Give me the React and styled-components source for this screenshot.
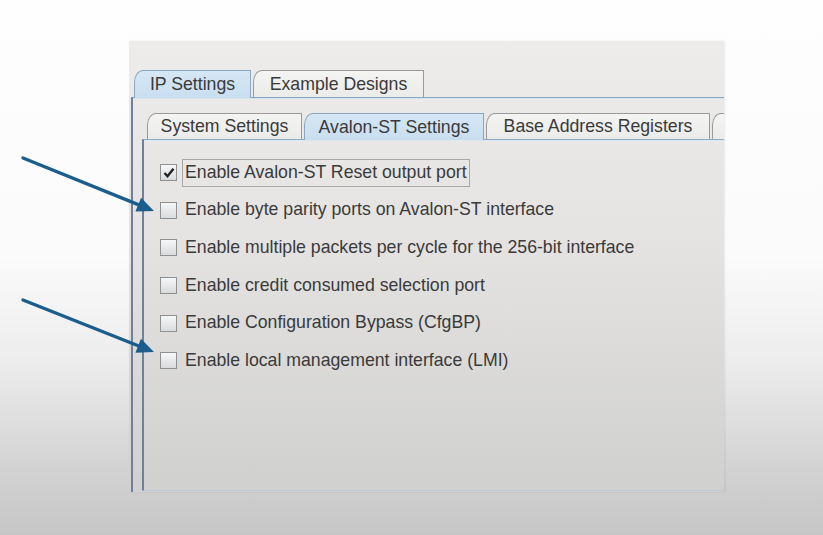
import React from "react";
import styled, { createGlobalStyle } from "styled-components";

const Global = createGlobalStyle`
  html, body { margin: 0; padding: 0; }
  body { font-family: "Liberation Sans", Arial, sans-serif; }
`;

const Page = styled.div`
  position: relative;
  width: 823px;
  height: 535px;
  overflow: hidden;
  padding: 41px 0 0 129px;
  box-sizing: border-box;
  background: linear-gradient(to bottom, #fefefe 0%, #fbfbfb 48%, #ececec 68%, #d2d2d2 88%, #c6c6c6 100%);
`;

const Panel = styled.div`
  width: 595px;
  height: 451px;
  box-sizing: border-box;
  padding: 29px 0 0 2px;
  overflow: hidden;
  display: flex;
  flex-direction: column;
  background: linear-gradient(to bottom, #edecea 0%, #e4e3e1 45%, #d0d0ce 100%);
  box-shadow: 1px 0 2px rgba(0, 0, 0, 0.08);
`;

const TabBar = styled.div`
  display: flex;
  align-items: flex-end;
  padding-left: ${(p) => p.$indent}px;
  position: relative;
  z-index: 1;
  flex-shrink: 0;
`;

const Tab = styled.div`
  width: ${(p) => p.$w}px;
  flex-shrink: 0;
  height: ${(p) => p.$h}px;
  box-sizing: border-box;
  display: flex;
  align-items: center;
  justify-content: center;
  white-space: nowrap;
  font-size: 17.7px;
  color: #3a3a3a;
  border: 1px solid ${(p) => (p.$active ? "#8ea7be" : "#9a9a9a")};
  border-bottom: none;
  border-top-left-radius: 9px 12px;
  margin-bottom: ${(p) => (p.$active ? "-1px" : "0")};
  background: ${(p) =>
    p.$active
      ? "linear-gradient(to bottom, #d6e7f4, #c8def0)"
      : "linear-gradient(to bottom, #f4f4f3, #ebebea)"};
  & + & {
    margin-left: ${(p) => (p.$gap !== undefined ? p.$gap : -1)}px;
  }
`;

const TabContent = styled.div`
  flex: 1;
  display: flex;
  flex-direction: column;
  border-left: 2px solid #6f7f9c;
  border-top: 1px solid #89a6c2;
  box-shadow: inset 0 1px 0 #d5e4f0;
  padding: 15px 0 0 9px;
  min-height: 0;
`;

const InnerContent = styled.div`
  flex: 1;
  border-left: 2px solid #6f7f9c;
  border-top: 1px solid #8eaac6;
  border-bottom: 1px solid #b9cadb;
  box-shadow: inset 0 1px 0 #dbe7f1;
  margin-bottom: 1px;
  padding: 14px 0 0 16px;
  display: flex;
  flex-direction: column;
`;

const Row = styled.div`
  height: 37.6px;
  display: flex;
  align-items: center;
`;

const Box = styled.span`
  width: 17px;
  height: 17px;
  box-sizing: border-box;
  border: 1px solid #8f9090;
  background: linear-gradient(to bottom, #f6f7f8 0%, #e4e6e8 60%, #d8dadc 100%);
  display: inline-flex;
  align-items: center;
  justify-content: center;
  margin-right: 5px;
  flex-shrink: 0;
`;

const Label = styled.span`
  font-size: 17.7px;
  color: #3a3a3a;
  white-space: nowrap;
  padding: 2px 2px 3px 2px;
  border: 1px solid ${(p) => (p.$focus ? "#a8a8a8" : "transparent")};
`;

const Arrows = styled.svg`
  position: absolute;
  left: 0;
  top: 0;
  pointer-events: none;
`;

function Arrow({ x1, y1, x2, y2 }) {
  const dx = x2 - x1;
  const dy = y2 - y1;
  const len = Math.hypot(dx, dy);
  const ux = dx / len;
  const uy = dy / len;
  const hl = 17;
  const hw = 7.5;
  const bx = x2 - ux * hl;
  const by = y2 - uy * hl;
  const px = -uy * hw;
  const py = ux * hw;
  return (
    <g>
      <line x1={x1} y1={y1} x2={bx + ux * 2} y2={by + uy * 2} stroke="#1b5e8e" strokeWidth="3.4" strokeLinecap="round" />
      <polygon points={`${x2},${y2} ${bx + px},${by + py} ${bx - px},${by - py}`} fill="#1b5e8e" />
    </g>
  );
}

const Check = () => (
  <svg width="12" height="11" viewBox="0 0 12 11">
    <path d="M1.5 6 L4.5 9.2 L10.5 1.8" fill="none" stroke="#222" strokeWidth="2.4" strokeLinejoin="miter" />
  </svg>
);

const options = [
  { label: "Enable Avalon-ST Reset output port", checked: true, focus: true },
  { label: "Enable byte parity ports on Avalon-ST interface" },
  { label: "Enable multiple packets per cycle for the 256-bit interface" },
  { label: "Enable credit consumed selection port" },
  { label: "Enable Configuration Bypass (CfgBP)" },
  { label: "Enable local management interface (LMI)" },
];

export default function App() {
  return (
    <>
      <Global />
      <Page>
        <Panel>
          <TabBar $indent={3}>
            <Tab $active $h={28} $w={117}>IP Settings</Tab>
            <Tab $h={27} $w={171}>Example Designs</Tab>
          </TabBar>
          <TabContent>
            <TabBar $indent={5}>
              <Tab $h={26} $w={155}>System Settings</Tab>
              <Tab $active $h={27} $w={180} $gap={3}>Avalon-ST Settings</Tab>
              <Tab $h={26} $w={224} $gap={1}>Base Address Registers</Tab>
              <Tab $h={26} $w={40} $gap={2} aria-hidden="true" />
            </TabBar>
            <InnerContent>
              {options.map((o) => (
                <Row key={o.label}>
                  <Box>{o.checked && <Check />}</Box>
                  <Label $focus={o.focus}>{o.label}</Label>
                </Row>
              ))}
            </InnerContent>
          </TabContent>
        </Panel>
        <Arrows width="823" height="535" viewBox="0 0 823 535">
          <Arrow x1={23} y1={158} x2={154} y2={211} />
          <Arrow x1={23} y1={300} x2={154} y2={352} />
        </Arrows>
      </Page>
    </>
  );
}
